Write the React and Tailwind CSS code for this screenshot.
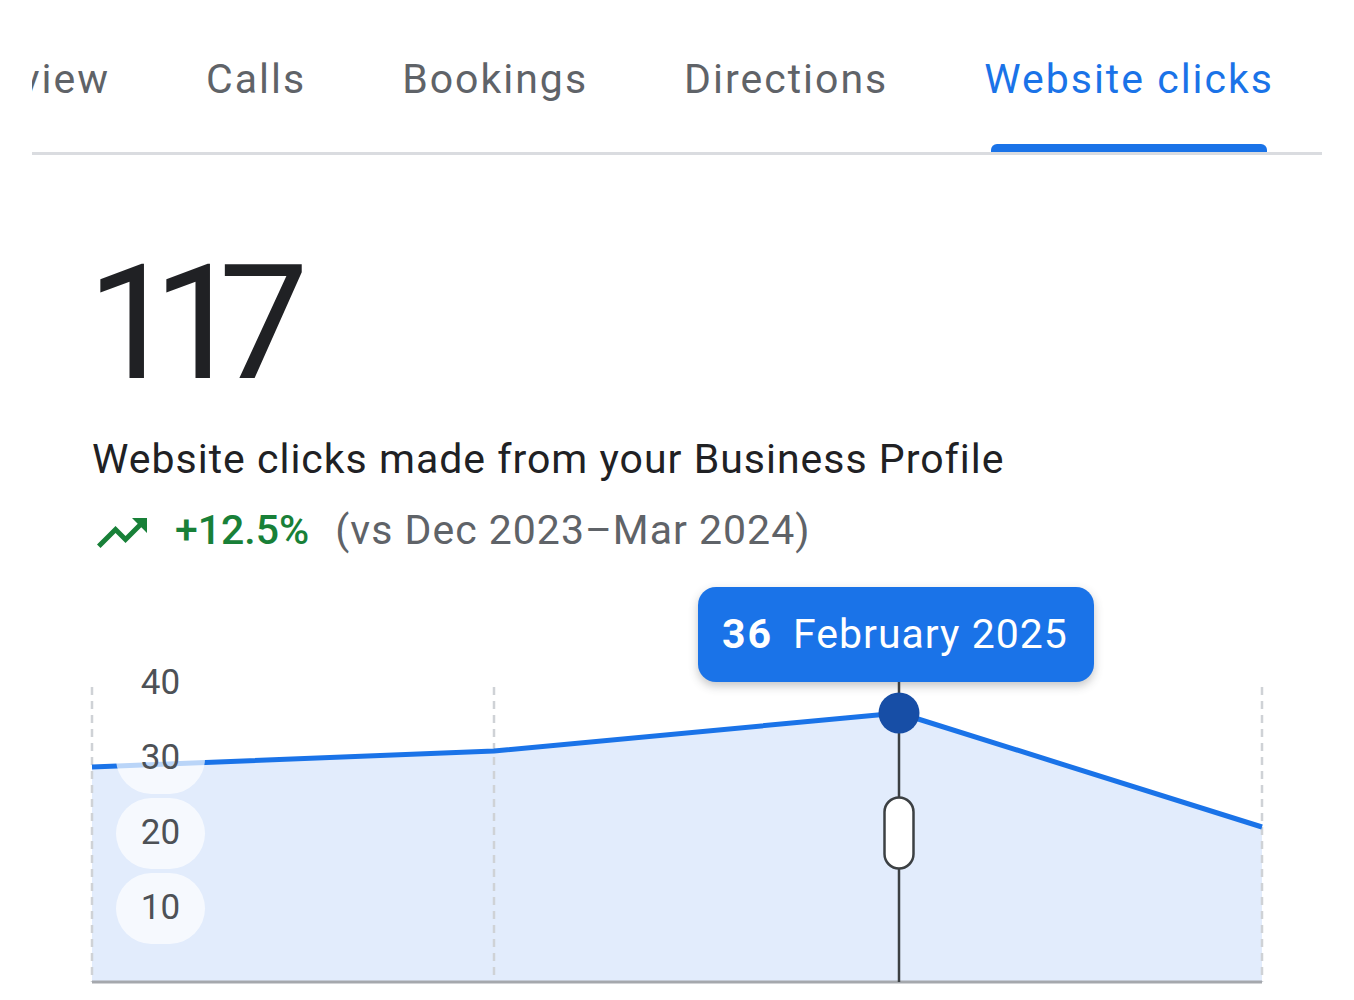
import React from 'react';

const tabs = ['Overview', 'Calls', 'Bookings', 'Directions', 'Website clicks'];
const active = 'Website clicks';

// chart points in page coordinates
const points = [
  [92, 767],
  [494, 751],
  [899, 713],
  [1262, 827],
];

function TrendUp() {
  return (
    <svg className="w-[60px] h-[60px] shrink-0 mt-[6px]" viewBox="0 0 24 24" fill="#188038">
      <path d="M16 6l2.29 2.29-4.88 4.88-4-4L2 16.59 3.41 18l6-6 4 4 6.3-6.29L22 12V6z" />
    </svg>
  );
}

function Tabs() {
  return (
    <div className="ml-[32px] w-[1290px] overflow-hidden flex justify-end border-b-[3px] border-[#dadce0]">
      {tabs.map((t) => {
        const isActive = t === active;
        return (
          <div key={t} className="shrink-0 flex flex-col pt-[55px]">
            <span
              className={`px-[48px] text-[41px] leading-[48px] whitespace-nowrap tracking-[2px] ${
                isActive ? 'text-[#1a73e8]' : 'text-[#5f6368]'
              }`}
            >
              {t}
            </span>
            <div
              className={`mt-[41px] h-[8px] ml-[55px] mr-[55px] rounded-t-[6px] ${
                isActive ? 'bg-[#1a73e8]' : 'bg-transparent'
              }`}
            />
          </div>
        );
      })}
    </div>
  );
}

function Chart() {
  const line = points.map((p, i) => `${i ? 'L' : 'M'}${p[0]} ${p[1]}`).join(' ');
  const area = `${line} L1262 982 L92 982 Z`;
  return (
    <div className="relative mt-[33px] h-[413px]">
      <svg className="block" width="1354" height="413" viewBox="0 587 1354 413">
        <path d={area} fill="#e2ecfc" />
        {[92, 494, 1262].map((x) => (
          <line key={x} x1={x} y1="687" x2={x} y2="982" stroke="#cfd2d6" strokeWidth="2.5" strokeDasharray="8 6" />
        ))}
        <line x1="92" y1="982" x2="1262" y2="982" stroke="#a5a8ad" strokeWidth="3" />
        <path d={line} fill="none" stroke="#1a73e8" strokeWidth="5" strokeLinejoin="round" />
        <line x1="899" y1="682" x2="899" y2="982" stroke="#3c4043" strokeWidth="2.5" />
        <circle cx="899" cy="713" r="20.5" fill="#174ea6" />
        <rect x="884.5" y="797.5" width="29" height="71" rx="14.5" fill="#ffffff" stroke="#3c4043" strokeWidth="2.5" />
      </svg>

      {/* y axis labels */}
      <div className="absolute left-[116px] top-[61px] flex flex-col gap-[4px]">
        {['40', '30', '20', '10'].map((v) => (
          <div
            key={v}
            className="w-[89px] h-[71px] rounded-full bg-white/70 flex items-center justify-center text-[35px] text-[#4d5156]"
          >
            {v}
          </div>
        ))}
      </div>

      {/* tooltip */}
      <div className="absolute left-[698px] top-0 w-[396px] h-[95px] rounded-[18px] bg-[#1a73e8] shadow-[0_4px_10px_rgba(60,64,67,0.3)] flex items-center pl-[24px] text-white text-[41px]">
        <span className="font-bold tracking-[2px]">36</span>
        <span className="ml-[20px] tracking-[1px]">February 2025</span>
      </div>
    </div>
  );
}

export default function App() {
  return (
    <div className="w-[1354px] h-[1000px] bg-white overflow-hidden font-['Roboto',_sans-serif]">
      <Tabs />
      <div className="pl-[92px]">
        <div className="mt-[89px] h-[160px] text-[160px] leading-[160px] text-[#202124] tracking-[-24px] -ml-[5px]">
          117
        </div>
        <div className="mt-[31px] text-[41px] leading-[48px] text-[#202124] tracking-[1px]">
          Website clicks made from your Business Profile
        </div>
        <div className="mt-[23px] h-[48px] flex items-center text-[41px] leading-[48px]">
          <TrendUp />
          <span className="ml-[23px] text-[#188038] font-medium">+12.5%</span>
          <span className="ml-[26px] text-[#5f6368] tracking-[1px]">(vs Dec 2023–Mar 2024)</span>
        </div>
      </div>
      <Chart />
    </div>
  );
}
